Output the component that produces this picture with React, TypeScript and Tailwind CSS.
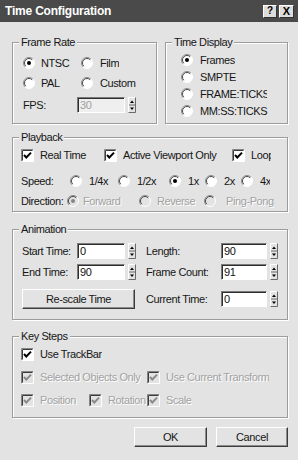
import type { ReactNode } from 'react';

const TXT = 'text-[11px] tracking-[-0.4px] leading-[14px] whitespace-nowrap';
const DIS = 'text-[#a2a2a2] [text-shadow:1px_1px_0_#fff]';

function Radio({ checked = false, disabled = false }: { checked?: boolean; disabled?: boolean }) {
  return (
    <svg width="12" height="12" viewBox="0 0 12 12" className="shrink-0">
      <circle cx="6" cy="6" r="5.5" fill={disabled ? '#e3e3e3' : '#fff'} />
      <path d="M2.11 9.89 A5.5 5.5 0 0 1 9.89 2.11" fill="none" stroke="#8a8a8a" strokeWidth="1" />
      <path d="M2.8 9.2 A4.5 4.5 0 0 1 9.2 2.8" fill="none" stroke="#4a4a4a" strokeWidth="1" />
      <path d="M9.89 2.11 A5.5 5.5 0 0 1 2.11 9.89" fill="none" stroke="#ffffff" strokeWidth="1" />
      {checked && <circle cx="6" cy="6" r="2" fill={disabled ? '#858585' : '#000'} />}
    </svg>
  );
}

function Check({ disabled = false }: { disabled?: boolean }) {
  return (
    <svg width="13" height="13" viewBox="0 0 13 13" className="shrink-0">
      <rect x="0" y="0" width="13" height="13" fill={disabled ? '#e3e3e3' : '#fff'} />
      <path d="M0.5 12.5 V0.5 H12.5" fill="none" stroke="#858585" />
      <path d="M1.5 11.5 V1.5 H11.5" fill="none" stroke="#3a3a3a" />
      <path d="M0.5 12.5 H12.5 V0.5" fill="none" stroke="#fff" />
      <path d="M3 6 L5.3 8.5 L10 3.6" fill="none" stroke={disabled ? '#8a8a8a' : '#000'} strokeWidth="2" />
    </svg>
  );
}

function Spin({ className = '' }: { className?: string }) {
  return (
    <svg width="8" height="16" viewBox="0 0 8 16" className={'shrink-0 ' + className}>
      <rect x="0" y="0" width="8" height="16" fill="#e3e3e3" />
      <path d="M0.5 15.5 V0.5 H7.5" fill="none" stroke="#fff" />
      <path d="M0.5 15.5 H7.5 V0.5" fill="none" stroke="#6a6a6a" />
      <path d="M1 8 H7" stroke="#6a6a6a" />
      <path d="M2 6 H6 L4 3.5 Z" fill="#000" />
      <path d="M2 10.5 H6 L4 13 Z" fill="#000" />
    </svg>
  );
}

function Field({ value, className, disabled = false }: { value: string; className: string; disabled?: boolean }) {
  return (
    <div
      className={
        'h-[16px] shrink-0 border border-t-[#7a7a7a] border-l-[#7a7a7a] border-b-white border-r-white pl-[2px] shadow-[inset_1px_1px_0_#2e2e2e] flex items-center ' +
        (disabled ? 'bg-[#efefef] text-[#a0a0a0] ' : 'bg-white text-[#111] ') +
        TXT +
        ' ' +
        className
      }
    >
      {value}
    </div>
  );
}

function RadioItem({ label, checked, disabled, className = '', gap = 'gap-[7px]' }: { label: string; checked?: boolean; disabled?: boolean; className?: string; gap?: string }) {
  return (
    <div className={'flex items-center shrink-0 overflow-hidden ' + gap + ' ' + className}>
      <Radio checked={checked} disabled={disabled} />
      <span className={TXT + ' ' + (disabled ? DIS : '')}>{label}</span>
    </div>
  );
}

function CheckItem({ label, disabled, className = '' }: { label: string; disabled?: boolean; className?: string }) {
  return (
    <div className={'flex items-center gap-[6px] shrink-0 overflow-hidden ' + className}>
      <Check disabled={disabled} />
      <span className={TXT + ' ' + (disabled ? DIS : '')}>{label}</span>
    </div>
  );
}

function Group({ label, className, children }: { label: string; className: string; children: ReactNode }) {
  return (
    <div className={'relative shrink-0 border border-[#9c9c9c] shadow-[inset_1px_1px_0_#fff,1px_1px_0_#fff] ' + className}>
      <span className={'absolute left-[6px] top-[-8px] bg-[#e3e3e3] px-[2px] ' + TXT}>{label}</span>
      {children}
    </div>
  );
}

function Button({ label, className }: { label: string; className: string }) {
  return (
    <div
      className={
        'h-[20px] shrink-0 flex items-center justify-center border border-t-white border-l-white border-r-[#3c3c3c] border-b-[#3c3c3c] bg-[#e3e3e3] shadow-[inset_-1px_-1px_0_#8c8c8c] ' +
        TXT +
        ' ' +
        className
      }
    >
      {label}
    </div>
  );
}

export default function App() {
  return (
    <div className="w-[298px] h-[460px] overflow-hidden bg-[#e3e3e3] text-[#161616] font-['Liberation_Sans',Arial,sans-serif]">
      <div className="h-[22px] bg-[#4a4a4a] flex items-center justify-between pl-[5px] pr-[4px]">
        <span className="text-white font-bold text-[12px] tracking-[-0.2px]">Time Configuration</span>
        <div className="flex gap-[2px]">
          <div className="w-[14px] h-[13px] bg-[#dcdcdc] border border-t-white border-l-white border-r-[#333] border-b-[#333] flex items-center justify-center text-[10px] font-bold leading-none text-black">?</div>
          <div className="w-[15px] h-[13px] bg-[#dcdcdc] border border-t-white border-l-white border-r-[#333] border-b-[#333] flex items-center justify-center text-[11px] font-bold leading-none text-black">X</div>
        </div>
      </div>

      <div className="pl-[12px] pr-[10px] pt-[20px] flex flex-col">
        <div className="flex gap-[8px]">
          <Group label="Frame Rate" className="w-[145px] h-[82px]">
            <div className="flex flex-col pl-[10px] pt-[10px]">
              <div className="flex h-[20px] items-center">
                <RadioItem label="NTSC" checked className="w-[58px]" gap="gap-[6px]" />
                <RadioItem label="Film" />
              </div>
              <div className="flex h-[20px] items-center">
                <RadioItem label="PAL" className="w-[58px]" gap="gap-[6px]" />
                <RadioItem label="Custom" />
              </div>
              <div className="mt-[2px] flex h-[20px] items-center">
                <span className={TXT + ' w-[54px]'}>FPS:</span>
                <Field value="30" disabled className="w-[48px]" />
                <Spin className="ml-[3px]" />
              </div>
            </div>
          </Group>
          <Group label="Time Display" className="w-[123px] h-[82px]">
            <div className="flex flex-col pl-[15px] pt-[8px]">
              <div className="flex h-[17px] items-center">
                <RadioItem label="Frames" checked />
              </div>
              <div className="flex h-[17px] items-center">
                <RadioItem label="SMPTE" />
              </div>
              <div className="flex h-[17px] items-center">
                <RadioItem label="FRAME:TICKS" className="w-[86px]" />
              </div>
              <div className="flex h-[17px] items-center">
                <RadioItem label="MM:SS:TICKS" className="w-[88px]" />
              </div>
            </div>
          </Group>
        </div>

        <Group label="Playback" className="mt-[13px] w-[276px] h-[75px]">
          <div className="flex flex-col pl-[8px] pt-[8px]">
            <div className="flex h-[18px] items-center">
              <CheckItem label="Real Time" className="w-[83px]" />
              <CheckItem label="Active Viewport Only" className="w-[128px]" />
              <CheckItem label="Loop" className="w-[39px]" />
            </div>
            <div className="mt-[8px] flex h-[18px] items-center">
              <span className={TXT + ' w-[49px]'}>Speed:</span>
              <RadioItem label="1/4x" className="w-[48px]" />
              <RadioItem label="1/2x" className="w-[51px]" />
              <RadioItem label="1x" checked className="w-[36px]" />
              <RadioItem label="2x" className="w-[36px]" />
              <RadioItem label="4x" className="w-[29px]" />
            </div>
            <div className="mt-[2px] flex h-[18px] items-center">
              <span className={TXT + ' w-[46px]'}>Direction:</span>
              <RadioItem label="Forward" checked disabled className="w-[72px]" gap="gap-[4px]" />
              <RadioItem label="Reverse" disabled className="w-[65px]" gap="gap-[6px]" />
              <RadioItem label="Ping-Pong" disabled gap="gap-[10px]" />
            </div>
          </div>
        </Group>

        <Group label="Animation" className="mt-[17px] w-[276px] h-[91px]">
          <div className="flex flex-col pl-[9px] pt-[13px]">
            <div className="flex h-[16px] items-center">
              <span className={TXT + ' w-[55px]'}>Start Time:</span>
              <Field value="0" className="w-[48px]" />
              <Spin className="ml-[3px]" />
              <span className={TXT + ' ml-[10px] w-[75px]'}>Length:</span>
              <Field value="90" className="w-[46px]" />
              <Spin className="ml-[3px]" />
            </div>
            <div className="mt-[5px] flex h-[16px] items-center">
              <span className={TXT + ' w-[55px]'}>End Time:</span>
              <Field value="90" className="w-[48px]" />
              <Spin className="ml-[3px]" />
              <span className={TXT + ' ml-[10px] w-[75px]'}>Frame Count:</span>
              <Field value="91" className="w-[46px]" />
              <Spin className="ml-[3px]" />
            </div>
            <div className="mt-[9px] flex h-[20px] items-center">
              <Button label="Re-scale Time" className="w-[113px]" />
              <span className={TXT + ' ml-[11px] w-[75px]'}>Current Time:</span>
              <Field value="0" className="w-[46px]" />
              <Spin className="ml-[3px]" />
            </div>
          </div>
        </Group>

        <Group label="Key Steps" className="mt-[16px] w-[276px] h-[82px]">
          <div className="flex flex-col pl-[8px] pt-[8px]">
            <div className="flex h-[18px] items-center">
              <CheckItem label="Use TrackBar" />
            </div>
            <div className="mt-[5px] flex h-[18px] items-center">
              <CheckItem label="Selected Objects Only" disabled className="w-[126px]" />
              <CheckItem label="Use Current Transform" disabled />
            </div>
            <div className="mt-[5px] flex h-[18px] items-center">
              <CheckItem label="Position" disabled className="w-[68px]" />
              <CheckItem label="Rotation" disabled className="w-[58px]" />
              <CheckItem label="Scale" disabled />
            </div>
          </div>
        </Group>

        <div className="mt-[9px] flex justify-end gap-[9px]">
          <Button label="OK" className="w-[73px]" />
          <Button label="Cancel" className="w-[72px]" />
        </div>
      </div>
    </div>
  );
}
